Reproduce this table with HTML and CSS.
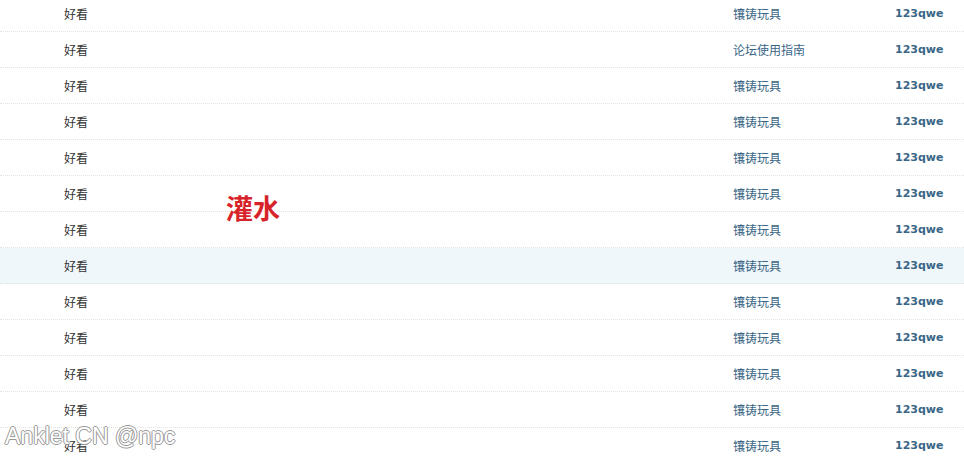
FILE: index.html
```html
<!DOCTYPE html>
<html lang="zh-CN">
<head>
    <meta charset="UTF-8">
    <title>帖子列表</title>
    <link rel="stylesheet" href="styles.css">
</head>
<body>
    <div class="thread-list">
        <div class="thread-row"><span class="subject">好看</span><a class="forum">镶铸玩具</a><a class="author">123qwe</a></div>
        <div class="thread-row"><span class="subject">好看</span><a class="forum">论坛使用指南</a><a class="author">123qwe</a></div>
        <div class="thread-row"><span class="subject">好看</span><a class="forum">镶铸玩具</a><a class="author">123qwe</a></div>
        <div class="thread-row"><span class="subject">好看</span><a class="forum">镶铸玩具</a><a class="author">123qwe</a></div>
        <div class="thread-row"><span class="subject">好看</span><a class="forum">镶铸玩具</a><a class="author">123qwe</a></div>
        <div class="thread-row"><span class="subject">好看</span><a class="forum">镶铸玩具</a><a class="author">123qwe</a></div>
        <div class="thread-row"><span class="subject">好看</span><a class="forum">镶铸玩具</a><a class="author">123qwe</a></div>
        <div class="thread-row hover"><span class="subject">好看</span><a class="forum">镶铸玩具</a><a class="author">123qwe</a></div>
        <div class="thread-row"><span class="subject">好看</span><a class="forum">镶铸玩具</a><a class="author">123qwe</a></div>
        <div class="thread-row"><span class="subject">好看</span><a class="forum">镶铸玩具</a><a class="author">123qwe</a></div>
        <div class="thread-row"><span class="subject">好看</span><a class="forum">镶铸玩具</a><a class="author">123qwe</a></div>
        <div class="thread-row"><span class="subject">好看</span><a class="forum">镶铸玩具</a><a class="author">123qwe</a></div>
        <div class="thread-row"><span class="subject">好看</span><a class="forum">镶铸玩具</a><a class="author">123qwe</a></div>

        <!-- 标签 -->
        <span class="stamp">灌水</span>
    </div>

    <div class="watermark">Anklet CN @npc</div>
</body>
</html>
```

FILE: styles.css
```css
body {
    margin: 0;
    background: #fff;
    font-family: "Noto Sans CJK SC", "Liberation Sans", sans-serif;
    font-size: 12px;
    overflow: hidden;
}

.thread-list {
    position: relative;
    margin-top: -4px;
}

.thread-row {
    display: flex;
    align-items: center;
    height: 35px;
    padding-left: 64px;
    border-bottom: 1px dotted #e2e2e2;
}

.thread-row.hover {
    background-color: #f0f7fb;
}

.subject {
    flex: 1;
    color: #333;
}

.forum {
    width: 162px;
    color: #3a6686;
}

.author {
    width: 69px;
    color: #3a6686;
    font-family: "DejaVu Sans", sans-serif;
    font-size: 11px;
    font-weight: bold;
}

.stamp {
    position: absolute;
    top: 196px;
    left: 226px;
    color: #d8232a;
    font-size: 27px;
    font-weight: bold;
    line-height: 32px;
}

.watermark {
    position: absolute;
    left: 5px;
    top: 423px;
    font-family: "Liberation Sans", sans-serif;
    font-size: 23px;
    color: #fff;
    text-shadow: 1px 0 #999, -1px 0 #999, 0 1px #999, 0 -1px #999;
}
```
